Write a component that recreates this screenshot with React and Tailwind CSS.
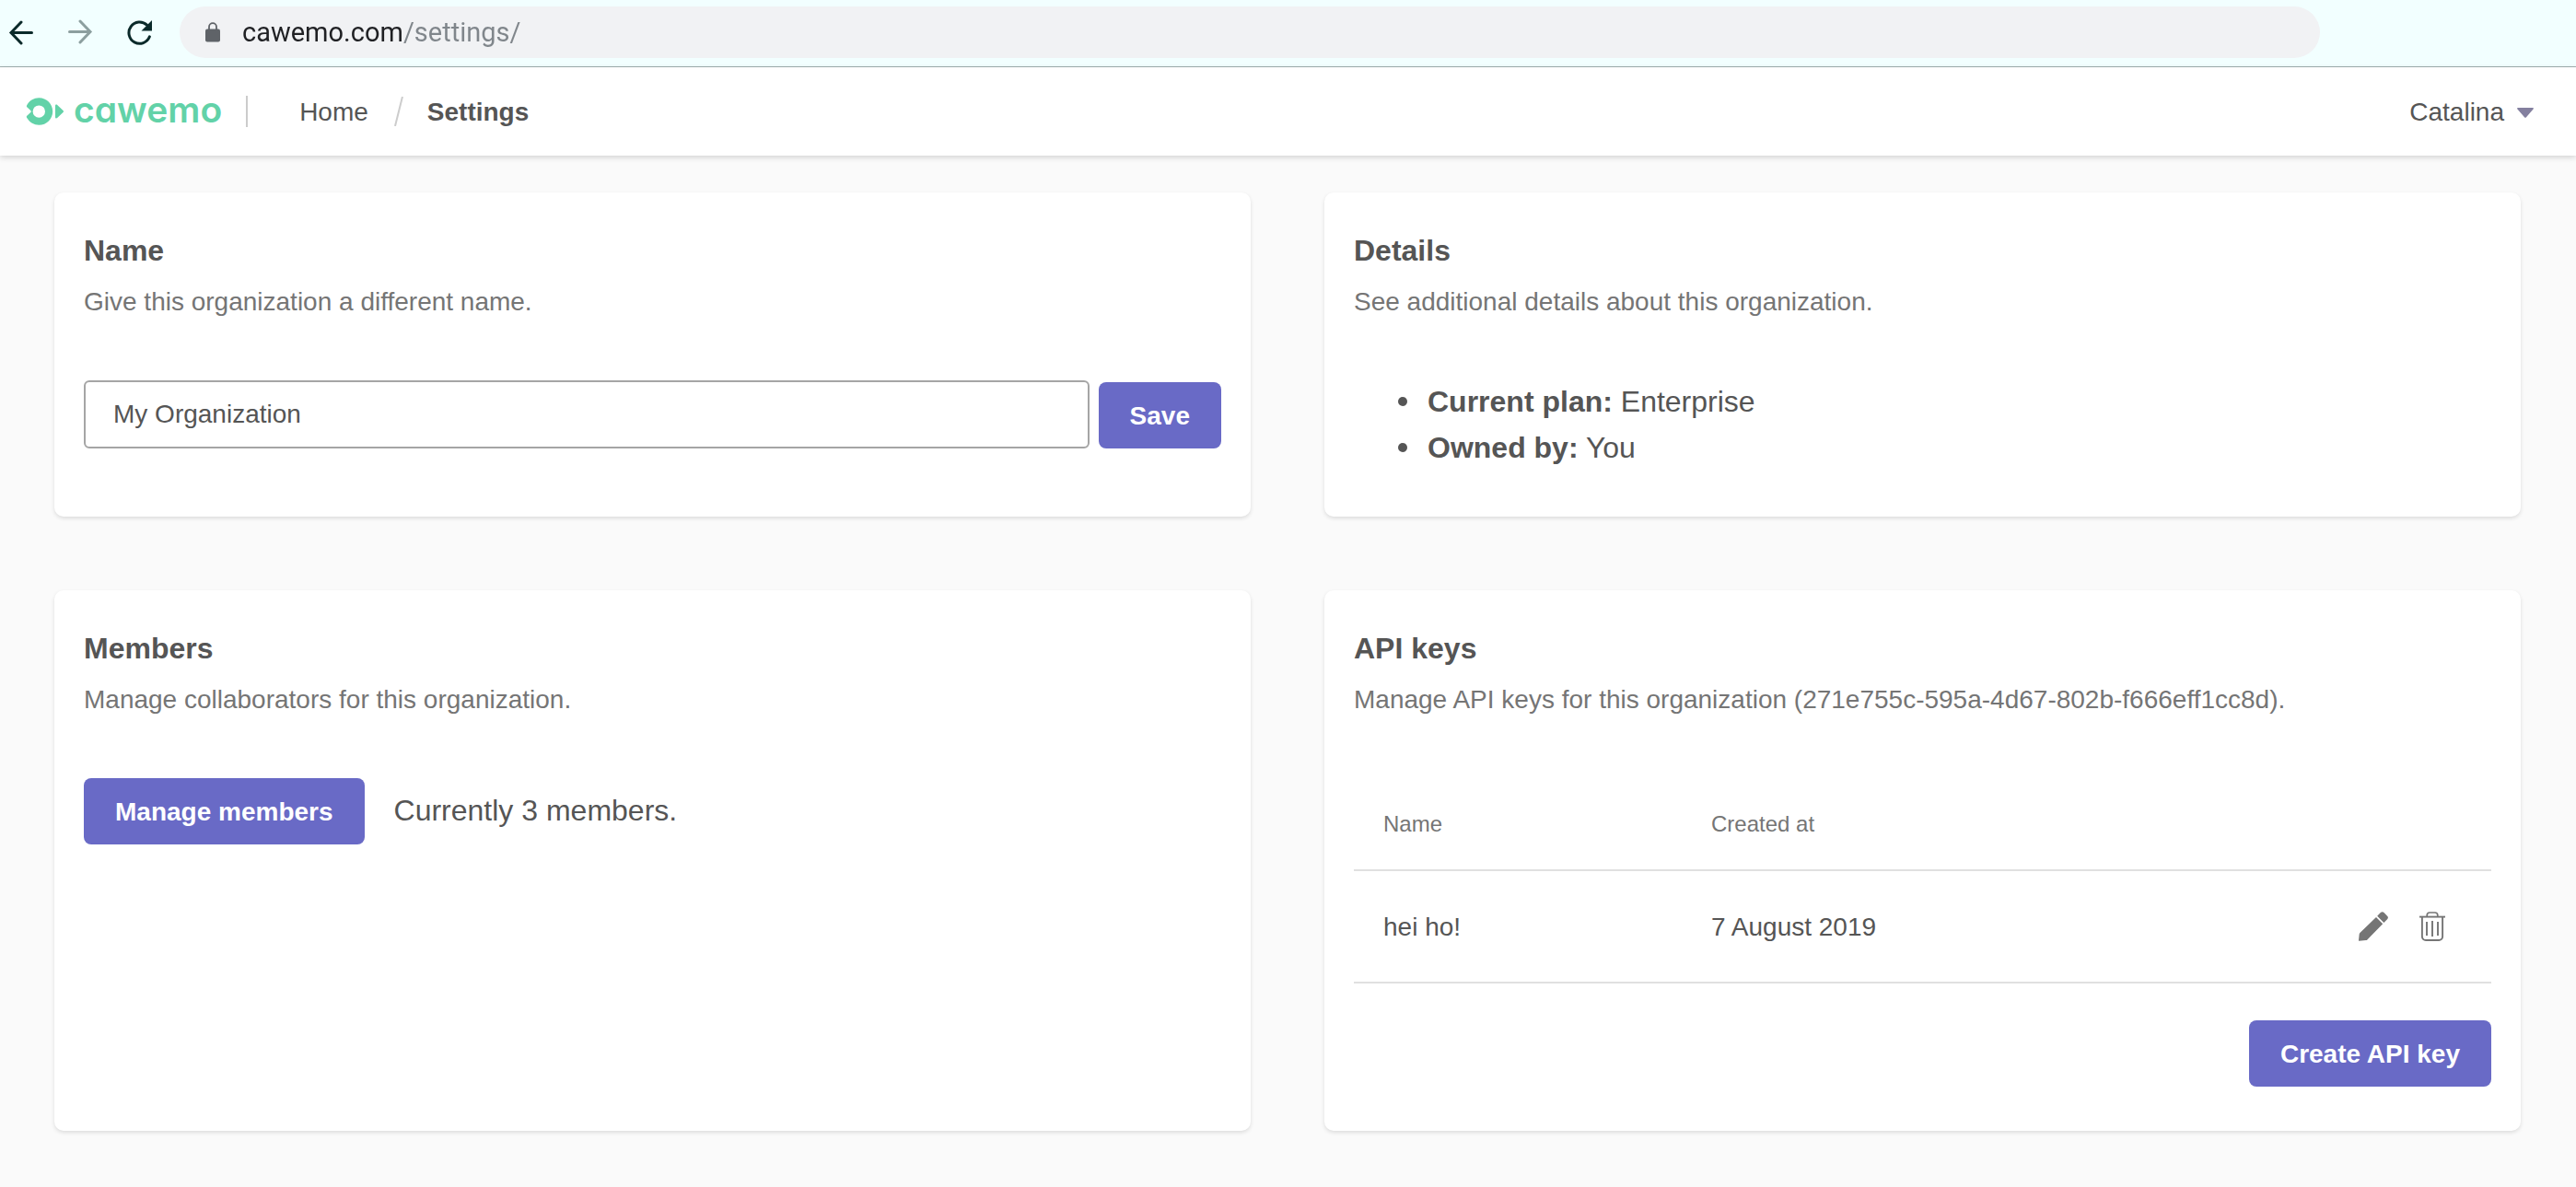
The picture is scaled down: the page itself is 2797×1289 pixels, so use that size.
import React from "react";

function BackIcon({ className }) {
  return (
    <svg viewBox="0 0 28 28" className={className} fill="none" stroke="currentColor" strokeWidth="3" strokeLinecap="round" aria-hidden="true">
      <path d="M14 3 3 14.5 14 26" strokeLinejoin="miter" />
      <path d="M4 14.5h21.5" />
    </svg>
  );
}

function ReloadIcon() {
  return (
    <svg viewBox="0 0 28 28" className="size-7" aria-hidden="true">
      <path d="M25.4 18.8A11.6 11.6 0 1 1 22.5 6.2" fill="none" stroke="currentColor" strokeWidth="3" strokeLinecap="round" />
      <path d="M28 1v11.5H16.5z" fill="currentColor" />
    </svg>
  );
}

function LockIcon() {
  return (
    <svg viewBox="0 0 16 22" className="h-[22px] w-4 shrink-0 text-[#5f6368]" aria-hidden="true">
      <rect x="0" y="7.5" width="16" height="14" rx="2" fill="currentColor" />
      <path d="M4 9V5.2a4 4 0 0 1 8 0V9" fill="none" stroke="currentColor" strokeWidth="1.8" />
    </svg>
  );
}

function LogoMark() {
  return (
    <svg viewBox="0 0 42 32" className="h-8 w-[42px]" fill="#62d2a8" aria-hidden="true">
      <path
        fillRule="evenodd"
        d="M1.6 8.6C4.2 4 8.900 1.200 14.300 1.200C22.600 1.200 29.200 7.800 29.200 16S22.600 30.800 14.300 30.800C8.900 30.800 4.200 28 1.600 23.600C0.600 22 0.500 21.200 1.500 20.400L5 17.300C6 16.400 6 15.600 5 14.700L1.500 11.600C0.600 10.800 0.700 10.100 1.600 8.600ZM14.300 9.400a6.700 6.700 0 1 0 0 13.400a6.700 6.700 0 0 0 0 -13.400Z"
      />
      <path d="M32 10c0-1.400 1.300-1.800 2.200-.9l6.300 6c.7.700.7 1.300 0 2l-6.300 6c-.9.900-2.200.5-2.200-.9z" />
    </svg>
  );
}

function PencilIcon() {
  return (
    <svg viewBox="0 0 32 32" className="size-8" fill="#757575" aria-hidden="true">
      <path d="M19 6 26.200 13.200 9.600 30.200C9.100 30.800 8.600 31 8 31.100L0.600 31.800C0.200 31.800 0 31.600 0 31.200L.7 24.500C.8 23.900 1 23.500 1.400 23Z" />
      <path d="M20.200 4.800 23.800 1.100C25 0 26.400 0 27.500 1.100L31.100 4.800C32.200 5.900 32.200 7.100 31.100 8.200L27.400 12Z" />
    </svg>
  );
}

function TrashIcon() {
  return (
    <svg viewBox="0 0 32 32" className="size-8" fill="none" stroke="#757575" aria-hidden="true">
      <path d="M2 5.600h28" strokeWidth="1.900" />
      <path d="M10.200 5.600V4a3 3 0 0 1 3-3h5.600a3 3 0 0 1 3 3v1.600" strokeWidth="1.700" />
      <path d="M4.900 5.600V27a4 4 0 0 0 4 4h14.200a4 4 0 0 0 4-4V5.600" strokeWidth="1.900" />
      <path d="M10 11v15M16 10v17M22 11v15" strokeWidth="1.900" />
    </svg>
  );
}

function Card({ title, description, children }) {
  return (
    <section className="rounded-[10px] bg-white px-8 pt-10 pb-12 shadow-[0_2px_4px_rgba(0,0,0,0.12)]">
      <h2 className="text-[32px] leading-[46px] font-bold">{title}</h2>
      <p className="mt-3 text-[28px] leading-[42px] text-[#757575]">{description}</p>
      {children}
    </section>
  );
}

function PrimaryButton({ children }) {
  return (
    <button type="button" className="h-[72px] shrink-0 rounded-lg bg-[#696ac6] px-[34px] pt-0.5 text-[28px] font-bold text-white">
      {children}
    </button>
  );
}

const apiKeys = [{ name: "hei ho!", createdAt: "7 August 2019" }];

const details = [
  { label: "Current plan:", value: "Enterprise" },
  { label: "Owned by:", value: "You" },
];

export default function App() {
  return (
    <div className="min-h-screen bg-[#fafafa] font-['Liberation_Sans',Arial,sans-serif] text-[#555]">
      <div className="flex h-[73px] items-center border-b border-[#a0afaf] bg-[#f2ffff] pr-[278px] pb-0.5 pl-[9px] text-[#0b2a2a]">
        <button type="button" aria-label="Back">
          <BackIcon className="size-7" />
        </button>
        <button type="button" aria-label="Forward" disabled className="ml-9 text-[#8c9f9f]">
          <BackIcon className="size-7 rotate-180" />
        </button>
        <button type="button" aria-label="Reload" className="ml-9">
          <ReloadIcon />
        </button>
        <label className="ml-[30px] flex h-14 grow items-center rounded-full bg-[#f1f2f4] pl-7">
          <LockIcon />
          <input
            type="text"
            aria-label="Address"
            defaultValue="cawemo.com/settings/"
            className="ml-6 grow bg-[linear-gradient(90deg,#202124_173px,#80868b_173px)] bg-clip-text pt-0.5 font-[Roboto,sans-serif] text-[29px] text-transparent outline-none"
          />
        </label>
      </div>

      <header className="relative flex h-24 items-center bg-white pr-[46px] pl-7 text-[28px] shadow-[0_2px_6px_rgba(0,0,0,0.16)]">
        <a href="#" className="flex items-center" aria-label="cawemo">
          <LogoMark />
          <span className="ml-2.5 pb-1 font-[Inter,sans-serif] text-[39px] leading-10 font-semibold text-[#62d2a8] [font-feature-settings:'cv11']">cawemo</span>
        </a>
        <nav aria-label="Breadcrumb" className="ml-[26px] flex items-center">
          <span className="h-[34px] w-0.5 bg-[#ccc]" />
          <a href="#" className="ml-14 pt-0.5">Home</a>
          <svg viewBox="0 0 10 32" className="ml-7 h-8 w-2.5" aria-hidden="true">
            <path d="M9 0 1 32" stroke="#ccc" strokeWidth="2" />
          </svg>
          <a href="#" aria-current="page" className="ml-[26px] pt-0.5 font-bold">Settings</a>
        </nav>
        <button type="button" className="ml-auto flex items-center gap-3.5 pt-0.5">
          Catalina
          <svg viewBox="0 0 18 11" className="h-[11px] w-[18px]" aria-hidden="true">
            <path d="M1 0h16c1 0 1.200.8.6 1.400L10 10.300c-.6.700-1.400.7-2 0L.4 1.400C-.2.800 0 0 1 0z" fill="#84809f" />
          </svg>
        </button>
      </header>

      <main className="grid grid-cols-2 gap-20 pt-10 pr-15 pb-[62px] pl-[59px]">
        <Card title="Name" description="Give this organization a different name.">
          <form className="mt-16 flex items-end gap-2.5">
            <input
              type="text"
              aria-label="Organization name"
              defaultValue="My Organization"
              className="h-[74px] min-w-0 grow rounded-md border-2 border-[#a5a5a5] bg-white px-[30px] text-[28px] outline-none"
            />
            <PrimaryButton>Save</PrimaryButton>
          </form>
        </Card>

        <Card title="Details" description="See additional details about this organization.">
          <ul className="mt-[62px] pb-0.5 pl-12 text-[32px] leading-[50px]">
            {details.map((item) => (
              <li key={item.label} className="flex items-center before:mr-[22px] before:size-2.5 before:rounded-full before:bg-[#555]">
                <span><b>{item.label}</b> {item.value}</span>
              </li>
            ))}
          </ul>
        </Card>

        <Card title="Members" description="Manage collaborators for this organization.">
          <div className="mt-16 flex items-baseline gap-8">
            <PrimaryButton>Manage members</PrimaryButton>
            <p className="text-[32px]">Currently 3 members.</p>
          </div>
        </Card>

        <Card title="API keys" description="Manage API keys for this organization (271e755c-595a-4d67-802b-f666eff1cc8d).">
          <table className="mt-16 w-full table-fixed text-left">
            <thead>
              <tr className="h-[100px] border-b-2 border-[#e0e0e0] text-2xl text-[#757575]">
                <th className="w-[356px] pl-8 font-normal">Name</th>
                <th className="pl-8 font-normal">Created at</th>
                <th className="w-[200px]" aria-label="Actions" />
              </tr>
            </thead>
            <tbody>
              {apiKeys.map((key) => (
                <tr key={key.name} className="h-[122px] border-b-2 border-[#e0e0e0] text-[28px]">
                  <td className="pt-0.5 pl-8">{key.name}</td>
                  <td className="pt-0.5 pl-8">{key.createdAt}</td>
                  <td className="pr-12">
                    <div className="flex justify-end gap-8">
                      <button type="button" aria-label="Edit"><PencilIcon /></button>
                      <button type="button" aria-label="Delete"><TrashIcon /></button>
                    </div>
                  </td>
                </tr>
              ))}
            </tbody>
          </table>
          <div className="mt-10 flex justify-end">
            <PrimaryButton>Create API key</PrimaryButton>
          </div>
        </Card>
      </main>
    </div>
  );
}
